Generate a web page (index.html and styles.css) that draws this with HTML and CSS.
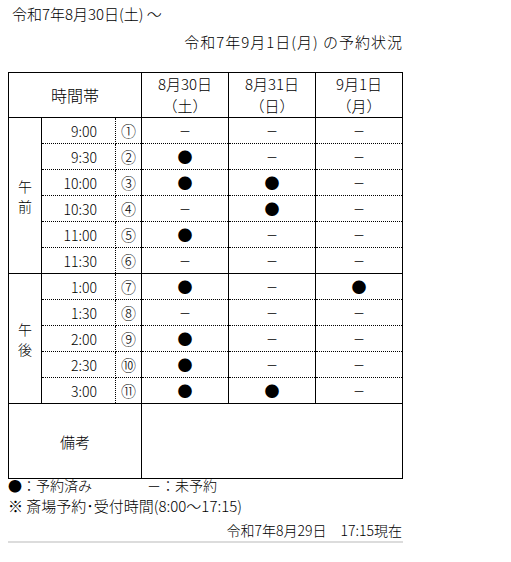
FILE: index.html
```html
<!DOCTYPE html>
<html lang="ja">
<head>
<meta charset="utf-8">
<title>予約状況</title>
<link rel="stylesheet" href="styles.css">
</head>
<body>
<div class="page">
  <div class="titles">
    <p class="title1">令和7年8月30日(土) ～</p>
    <p class="title2">令和7年9月1日(月) の予約状況</p>
  </div>
  <table class="sched">
    <colgroup>
      <col class="c-period"><col class="c-time"><col class="c-num">
      <col class="c-day"><col class="c-day"><col class="c-day3">
    </colgroup>
    <thead>
      <tr class="head">
        <th colspan="3" class="h-slot">時間帯</th>
        <th>8月30日<br>（土）</th>
        <th>8月31日<br>（日）</th>
        <th>9月1日<br>（月）</th>
      </tr>
    </thead>
    <tbody>
      <tr class="row group-start">
        <td rowspan="6" class="period">午<br>前</td>
        <td class="time">9:00</td><td class="num">①</td>
        <td class="none">－</td><td class="none">－</td><td class="none">－</td>
      </tr>
      <tr class="row">
        <td class="time">9:30</td><td class="num">②</td>
        <td class="booked">●</td><td class="none">－</td><td class="none">－</td>
      </tr>
      <tr class="row">
        <td class="time">10:00</td><td class="num">③</td>
        <td class="booked">●</td><td class="booked">●</td><td class="none">－</td>
      </tr>
      <tr class="row">
        <td class="time">10:30</td><td class="num">④</td>
        <td class="none">－</td><td class="booked">●</td><td class="none">－</td>
      </tr>
      <tr class="row">
        <td class="time">11:00</td><td class="num">⑤</td>
        <td class="booked">●</td><td class="none">－</td><td class="none">－</td>
      </tr>
      <tr class="row">
        <td class="time">11:30</td><td class="num">⑥</td>
        <td class="none">－</td><td class="none">－</td><td class="none">－</td>
      </tr>
      <tr class="row group-start">
        <td rowspan="5" class="period">午<br>後</td>
        <td class="time">1:00</td><td class="num">⑦</td>
        <td class="booked">●</td><td class="none">－</td><td class="booked">●</td>
      </tr>
      <tr class="row">
        <td class="time">1:30</td><td class="num">⑧</td>
        <td class="none">－</td><td class="none">－</td><td class="none">－</td>
      </tr>
      <tr class="row">
        <td class="time">2:00</td><td class="num">⑨</td>
        <td class="booked">●</td><td class="none">－</td><td class="none">－</td>
      </tr>
      <tr class="row">
        <td class="time">2:30</td><td class="num">⑩</td>
        <td class="booked">●</td><td class="none">－</td><td class="none">－</td>
      </tr>
      <tr class="row">
        <td class="time">3:00</td><td class="num">⑪</td>
        <td class="booked">●</td><td class="booked">●</td><td class="none">－</td>
      </tr>
      <tr class="remarks">
        <td colspan="3" class="remarks-label">備考</td>
        <td colspan="3" class="remarks-body"></td>
      </tr>
    </tbody>
  </table>
  <div class="legend">
    <p class="l1"><span class="lg-item">●：予約済み</span><span class="lg-item2">－：未予約</span></p>
    <p class="l2">※ 斎場予約･受付時間(8:00～17:15)</p>
    <p class="l3">令和7年8月29日　17:15現在</p>
  </div>
  <div class="rule"></div>
</div>
</body>
</html>
```

FILE: styles.css
```css
html, body {
  margin: 0;
  padding: 0;
  background: #ffffff;
}
body {
  font-family: "Noto Sans CJK JP", "Noto Sans", sans-serif;
  font-size: 14px;
  font-weight: 300;
  color: #000;
}
.page {
  width: 396px;
  padding-left: 8px;
}
.titles p {
  margin: 0;
  line-height: 28px;
  font-size: 15px;
}
.title1 {
  padding-left: 4px;
}
.title2 {
  text-align: right;
  padding-right: 1px;
  letter-spacing: 1px;
}
.sched {
  margin-top: 16px;
  border-collapse: collapse;
  table-layout: fixed;
  width: 394px;
}
.c-period { width: 33px; }
.c-time { width: 74px; }
.c-num { width: 26px; }
.c-day { width: 87px; }
.c-day3 { width: 87px; }
.sched th, .sched td {
  border: 1px solid #000;
  padding: 0;
  font-weight: 300;
  text-align: center;
  vertical-align: middle;
}
.head th {
  height: 44px;
  line-height: 22px;
  font-size: 15px;
}
.head th.h-slot {
  font-size: 16px;
}
.row td {
  height: 25px;
  line-height: 16px;
  border-top: 1px dotted #000;
  border-bottom: 1px dotted #000;
}
.row.group-start td {
  border-top: 1px solid #000;
}
.row td.period {
  border: 1px solid #000;
  line-height: 20px;
}
.row td.time {
  text-align: right;
  padding-right: 18px;
  border-right: 1px dotted #000;
}
.row td.num {
  border-left: 1px dotted #000;
  font-size: 15px;
}
.booked {
  font-size: 15px;
}
.none {
  font-size: 12px;
}
.sched td.none {
  font-weight: 400;
}
.remarks td {
  height: 74px;
  border-top: 1px solid #000;
}
.remarks-label {
  font-size: 15px;
}
.legend p {
  margin: 0;
  white-space: nowrap;
}
.l1 {
  line-height: 13px;
}
.lg-item2 {
  margin-left: 55px;
}
.l2 {
  line-height: 27px;
  font-size: 15px;
}
.l3 {
  line-height: 22px;
  text-align: right;
  padding-right: 2px;
}
.rule {
  border-top: 2px solid #dcdcdc;
  width: 395px;
}
```
